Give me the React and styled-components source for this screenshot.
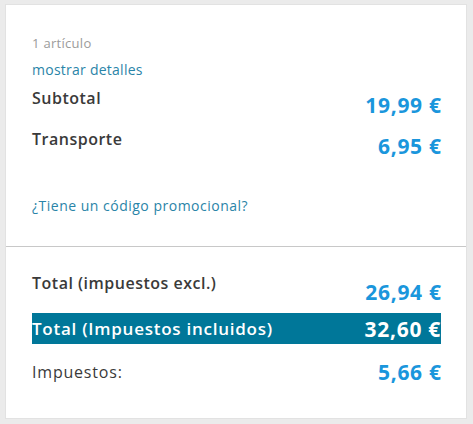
import React from 'react'
import styled, { createGlobalStyle } from 'styled-components'

const GlobalStyle = createGlobalStyle`
  body {
    margin: 0;
    background: #ebebeb;
    font-family: 'Open Sans', 'Liberation Sans', sans-serif;
  }
  * { box-sizing: border-box; }
`

const totals = {
  count: '1 artículo',
  subtotal: '19,99 €',
  shipping: '6,95 €',
  excl: '26,94 €',
  incl: '32,60 €',
  taxes: '5,66 €',
}

const App = () => {
  return (
    <Page>
      <GlobalStyle />
      <Card>
        <TopSection>
          <Count>{totals.count}</Count>
          <Link>mostrar detalles</Link>
          <Row>
            <Label>Subtotal</Label>
            <Amount>{totals.subtotal}</Amount>
          </Row>
          <Row gap={12}>
            <Label>Transporte</Label>
            <Amount>{totals.shipping}</Amount>
          </Row>
          <Promo>¿Tiene un código promocional?</Promo>
        </TopSection>
        <Divider />
        <BottomSection>
          <Row gap={26} shift={7}>
            <Label>Total (impuestos excl.)</Label>
            <Amount>{totals.excl}</Amount>
          </Row>
          <TotalBar>
            <span>Total (Impuestos incluidos)</span>
            <BarAmount>{totals.incl}</BarAmount>
          </TotalBar>
          <TaxRow>
            <TaxLabel>Impuestos:</TaxLabel>
            <Amount>{totals.taxes}</Amount>
          </TaxRow>
        </BottomSection>
      </Card>
    </Page>
  )
}

export default App

const Page = styled.div`
  padding: 4px 6px 5px 5px;
`
const Card = styled.div`
  background: #fff;
  border: 1px solid #e2e2e2;
  height: 415px;
`
const TopSection = styled.div`
  padding: 28px 25px 30px 26px;
`
const Count = styled.div`
  font-size: 13px;
  line-height: 20px;
  letter-spacing: 0.3px;
  color: #9b9b9b;
`
const Link = styled.div`
  margin-top: 7px;
  font-size: 14px;
  line-height: 20px;
  letter-spacing: 0.25px;
  color: #2a84a8;
`
const Row = styled.div`
  display: flex;
  justify-content: space-between;
  align-items: flex-start;
  margin-top: ${({ gap }) => gap ?? 8}px;
  & > :last-child {
    margin-top: ${({ shift }) => shift ?? 5}px;
  }
`
const Label = styled.div`
  font-size: 16px;
  line-height: 20px;
  font-weight: 600;
  letter-spacing: 0.5px;
  color: #3a3a3a;
`
const Amount = styled.div`
  font-size: 21px;
  line-height: 24px;
  font-weight: 700;
  letter-spacing: 0.7px;
  margin-right: -0.7px;
  color: #1a96dc;
`
const Promo = styled.div`
  margin-top: 38px;
  font-size: 14px;
  line-height: 20px;
  letter-spacing: 0.5px;
  color: #2a84a8;
`
const Divider = styled.hr`
  margin: 0;
  border: 0;
  border-top: 1px solid #c8c8c8;
`
const BottomSection = styled.div`
  padding: 0 25px 0 26px;
`
const TotalBar = styled.div`
  display: flex;
  justify-content: space-between;
  align-items: center;
  margin-top: 9px;
  height: 31px;
  background: #007799;
  color: #fff;
  font-size: 17px;
  font-weight: 600;
  letter-spacing: 0.75px;
  overflow: hidden;
`
const BarAmount = styled.span`
  font-size: 21px;
  font-weight: 700;
  letter-spacing: 0.7px;
`
const TaxRow = styled.div`
  display: flex;
  justify-content: space-between;
  align-items: center;
  margin-top: 16px;
  height: 24px;
`
const TaxLabel = styled(Label)`
  font-weight: 500;
  letter-spacing: 0.8px;
`
